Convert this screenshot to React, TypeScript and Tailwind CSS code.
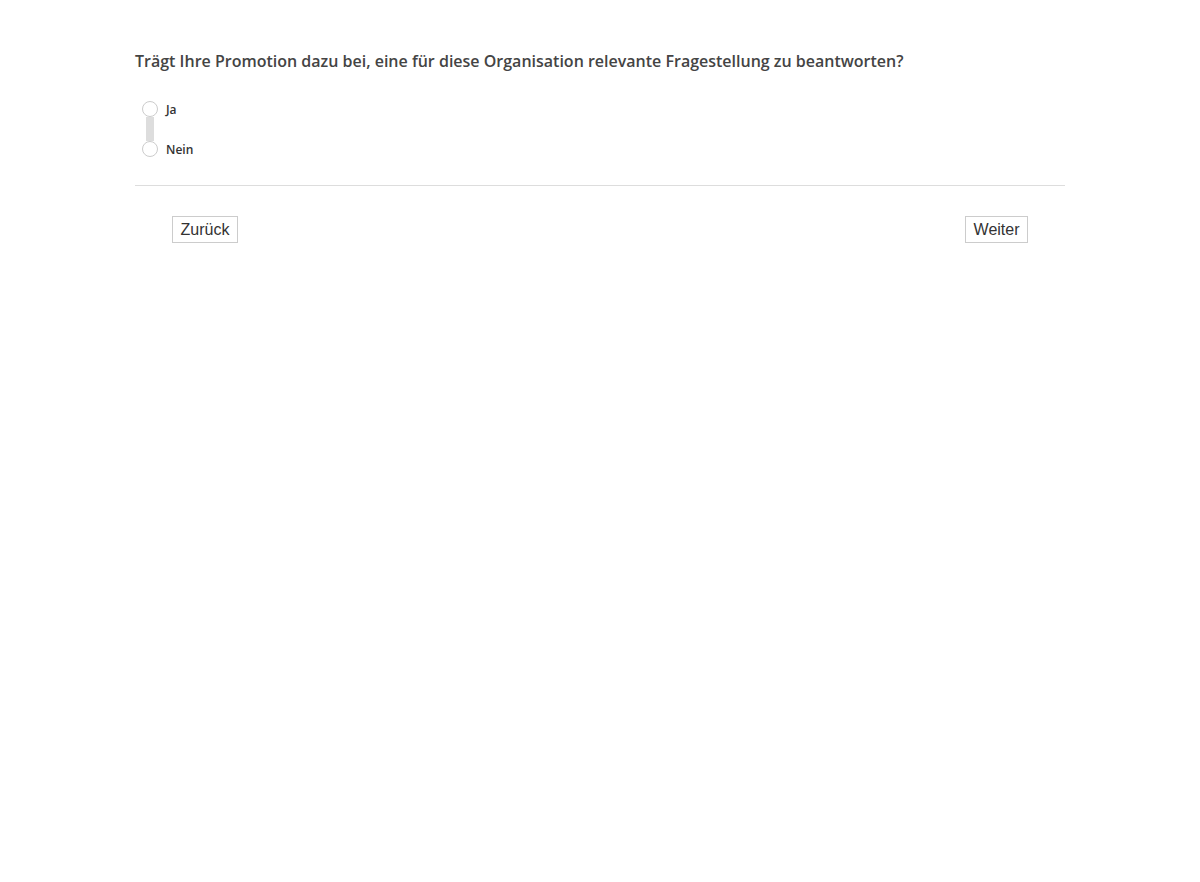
export default function App() {
  return (
    <div className="min-h-screen bg-white" style={{ fontFamily: '"Open Sans", sans-serif' }}>
      <div className="mx-auto w-[930px] pt-[50px]">
        <h2 className="text-[16px] leading-[22px] font-semibold text-[#444]">
          Trägt Ihre Promotion dazu bei, eine für diese Organisation relevante Fragestellung zu beantworten?
        </h2>

        <div className="mt-[29px] ml-[7px] flex">
          <div className="flex flex-col items-center w-[16px]">
            <span className="block w-[16px] h-[16px] rounded-full border border-[#ccc] bg-white" />
            <span className="block w-[8px] h-[24px] bg-[#ddd]" />
            <span className="block w-[16px] h-[16px] rounded-full border border-[#ccc] bg-white" />
          </div>
          <div className="ml-[8px] flex flex-col justify-between text-[12px] font-semibold text-[#333]">
            <span className="leading-[18px]">Ja</span>
            <span className="leading-[18px] -mb-[2px]">Nein</span>
          </div>
        </div>

        <div className="mt-[28px] border-t border-[#ddd]" />

        <div className="flex justify-between pl-[37px] pr-[37px] pt-[30px]" style={{ fontFamily: '"Liberation Sans", Arial, sans-serif' }}>
          <button className="h-[27px] px-[7.5px] border border-[#ccc] bg-white text-[16px] text-[#333] leading-none">Zurück</button>
          <button className="h-[27px] px-[7.5px] border border-[#ccc] bg-white text-[16px] text-[#333] leading-none">Weiter</button>
        </div>
      </div>
    </div>
  );
}
